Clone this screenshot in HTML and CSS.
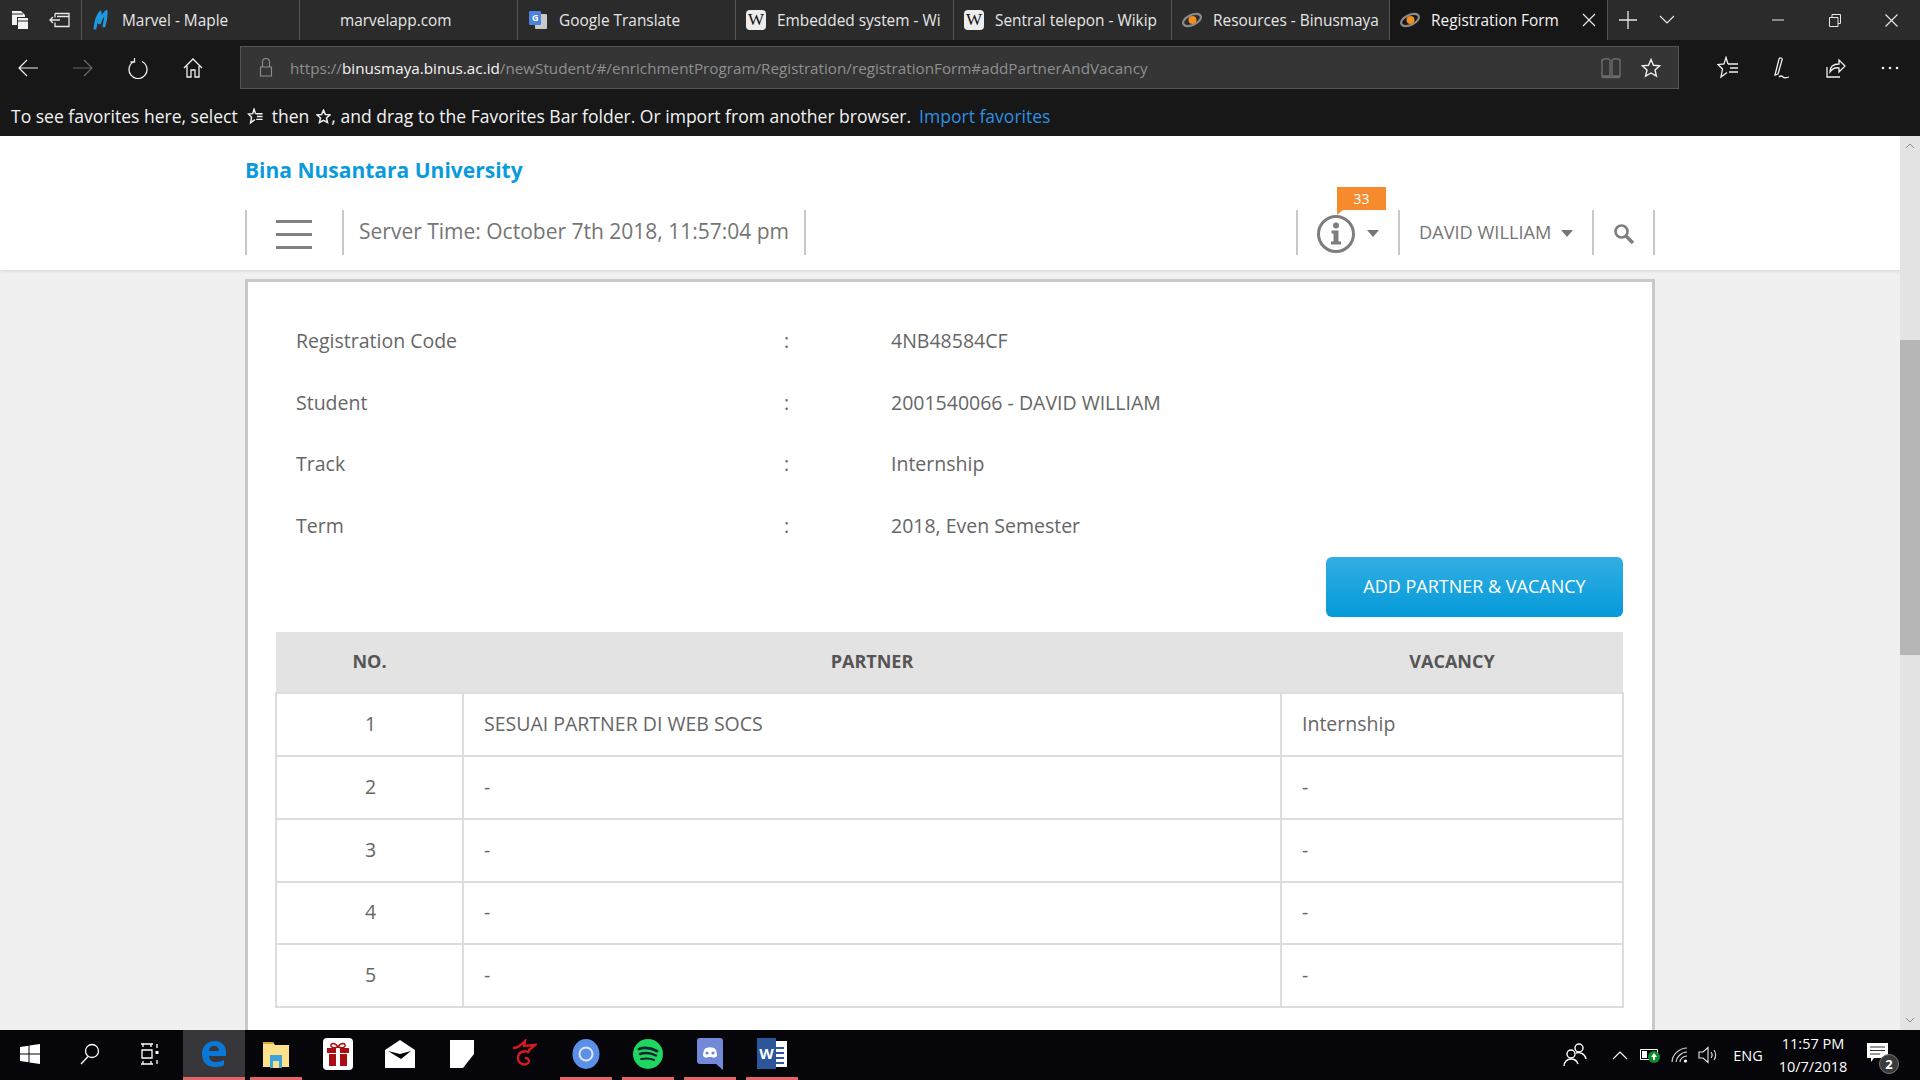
FILE: index.html
```html
<!DOCTYPE html>
<html lang="en">
<head>
<meta charset="utf-8">
<title>Registration Form</title>
<link rel="stylesheet" href="styles.css">
</head>
<body>
<div class="tabbar">
  <div class="tb-tool"><svg width="20" height="22" viewBox="0 0 20 22"><path d="M2 2h9l4 4v2H7v8H2z" fill="#f2f2f2"/><path d="M8 9h10v11H8z" fill="#f2f2f2"/><path d="M8 12h10" stroke="#2b2b2b" stroke-width="1"/><path d="M2 5h11" stroke="#2b2b2b" stroke-width="1"/></svg></div>
  <div class="tb-tool"><svg width="22" height="18" viewBox="0 0 22 18" fill="none" stroke="#e8e8e8" stroke-width="1.3"><path d="M6 2.500h14v13H6v-4M6 6.500v-4M8 5.500h12M1 9h10M4 6 1 9l3 3"/></svg></div>
  <div class="tab first"><svg class="fav" width="16" height="20" viewBox="0 0 16 20" fill="none" stroke="#1e9be0" stroke-width="3" stroke-linecap="round"><path d="M2 18C3 11 5 5 7 3c.5 4-.5 9-1 11 2-5 4-10 7-12 .5 5-1 10-2 14"/></svg><span>Marvel - Maple</span></div>
  <div class="tab"><span class="nofav">marvelapp.com</span></div>
  <div class="tab"><svg class="fav" width="18" height="20" viewBox="0 0 18 20"><rect x="6" y="4" width="12" height="15" rx="1" fill="#c9c9c9"/><rect x="0" y="1" width="12" height="14" rx="1" fill="#4a83e0"/><text x="3" y="11" class="gt">G</text></svg><span>Google Translate</span></div>
  <div class="tab"><span class="wiki">W</span><span>Embedded system - Wi</span></div>
  <div class="tab"><span class="wiki">W</span><span>Sentral telepon - Wikip</span></div>
  <div class="tab"><svg class="fav" width="20" height="18" viewBox="0 0 20 18"><ellipse cx="10" cy="9" rx="9.500" ry="5" transform="rotate(-25 10 9)" fill="none" stroke="#8a8a8a" stroke-width="2.200"/><circle cx="10.500" cy="9" r="4" fill="#ef8f1c"/></svg><span>Resources - Binusmaya</span></div>
  <div class="tab active"><svg class="fav" width="20" height="18" viewBox="0 0 20 18"><ellipse cx="10" cy="9" rx="9.500" ry="5" transform="rotate(-25 10 9)" fill="none" stroke="#8a8a8a" stroke-width="2.200"/><circle cx="10.500" cy="9" r="4" fill="#ef8f1c"/></svg><span>Registration Form</span><svg class="tab-x" width="14" height="14" viewBox="0 0 14 14" stroke="#e8e8e8" stroke-width="1.200"><path d="M1 1l12 12M13 1 1 13"/></svg></div>
  <div class="newtab"><svg width="18" height="18" viewBox="0 0 18 18" stroke="#e8e8e8" stroke-width="1.300"><path d="M9 0v18M0 9h18"/></svg></div>
  <div class="newtab"><svg width="16" height="10" viewBox="0 0 16 10" fill="none" stroke="#e8e8e8" stroke-width="1.200"><path d="M1 1l7 7 7-7"/></svg></div>
  <div class="winctl">
    <div class="winbtn"><svg width="12" height="2" viewBox="0 0 12 2"><path d="M0 1h12" stroke="#e8e8e8"/></svg></div>
    <div class="winbtn"><svg width="12" height="13" viewBox="0 0 12 13" fill="none" stroke="#e8e8e8"><path d="M.5 3.500h8.500v9H.5zM3 3.500V.5h8.500v9H9"/></svg></div>
    <div class="winbtn"><svg width="13" height="13" viewBox="0 0 13 13" stroke="#e8e8e8" stroke-width="1.100"><path d="M.5.5l12 12M12.500.5l-12 12"/></svg></div>
  </div>
</div>

<div class="toolbar">
  <div class="nav-btn"><svg width="20" height="18" viewBox="0 0 20 18" fill="none" stroke="#f0f0f0" stroke-width="1.200"><path d="M20 9H1M9 1 1 9l8 8"/></svg></div>
  <div class="nav-btn"><svg width="20" height="18" viewBox="0 0 20 18" fill="none" stroke="#666" stroke-width="1.200"><path d="M0 9h19M11 1l8 8-8 8"/></svg></div>
  <div class="nav-btn"><svg width="20" height="22" viewBox="0 0 20 22" fill="none" stroke="#f0f0f0" stroke-width="1.300"><path d="M6 4.500a9 9 0 1 0 8 0M6.500 1v4h-4"/></svg></div>
  <div class="nav-btn"><svg width="20" height="20" viewBox="0 0 20 20" fill="none" stroke="#f0f0f0" stroke-width="1.300"><path d="M1 10 10 1l9 9M4 8v11h4v-7h4v7h4V8"/></svg></div>
  <div class="address">
    <svg class="lock" width="14" height="19" viewBox="0 0 14 19" fill="none" stroke="#8f8f8f" stroke-width="1.100"><path d="M1.500 9h11v9h-11zM3.500 9V4a3.500 3.500 0 0 1 7 0v5"/></svg>
    <div class="url">https://<b>binusmaya.binus.ac.id</b>/newStudent/#/enrichmentProgram/Registration/registrationForm#addPartnerAndVacancy</div>
    <svg class="book" width="20" height="22" viewBox="0 0 20 22" fill="none" stroke="#6a6a6a" stroke-width="1.500"><path d="M1 3c3-1.500 6-1.500 8 0v16H1zM19 3c-3-1.500-6-1.500-8 0v16h8zM1 20.500h18"/></svg>
    <svg class="star" width="20" height="20" viewBox="0 0 20 20" fill="none" stroke="#f0f0f0" stroke-width="1.400"><path d="M10 1.500l2.500 5.800 6.200.5-4.700 4.100 1.400 6.100L10 15l-5.400 3 1.400-6.100L1.300 7.800l6.200-.5z"/></svg>
  </div>
  <div class="tool-row">
    <div class="act"><svg width="22" height="24" viewBox="0 0 22 24" fill="none" stroke="#f0f0f0" stroke-width="1.300"><path d="M11 8 9 1.500 7 8l-6 .5 4.500 4.500L4 21l6-4.500M11 8h10M13 12h8M12 16h9"/></svg></div>
    <div class="act"><svg width="20" height="24" viewBox="0 0 20 24" fill="none" stroke="#f0f0f0" stroke-width="1.300"><path d="M3 19 7 3c1-2 4-1 3 1L6 18zM7 21c2-2 3-1 4 0s3 1 6 0"/></svg></div>
    <div class="act"><svg width="20" height="22" viewBox="0 0 20 22" fill="none" stroke="#f0f0f0" stroke-width="1.300"><path d="M1 10v10h13M4 15c0-6 4-8 9-8V3l6 6-6 6v-4c-4-1-7 1-9 4z"/></svg></div>
    <div class="act"><svg width="18" height="4" viewBox="0 0 18 4" fill="#f0f0f0"><circle cx="2" cy="2" r="1.300"/><circle cx="9" cy="2" r="1.300"/><circle cx="16" cy="2" r="1.300"/></svg></div>
  </div>
</div>

<div class="favbar">
  <span>To see favorites here, select</span>
  <svg class="fav-hub" width="17" height="17" viewBox="0 0 22 24" fill="none" stroke="#f0f0f0" stroke-width="2"><path d="M11 8 9 1.500 7 8l-6 .5 4.500 4.500L4 21l6-4.500M11 8h10M13 12h8M12 16h9"/></svg>
  <span>then</span>
  <svg class="fav-star" width="15" height="15" viewBox="0 0 20 20" fill="none" stroke="#f0f0f0" stroke-width="2"><path d="M10 1.500l2.500 5.800 6.200.5-4.700 4.100 1.400 6.100L10 15l-5.400 3 1.400-6.100L1.300 7.800l6.200-.5z"/></svg><span>, and drag to the Favorites Bar folder. Or import from another browser.</span>
  <a class="import">Import favorites</a>
</div>

<div class="viewport">
  <div class="page">
    <header class="head">
      <div class="brand">Bina Nusantara University</div>
      <div class="topnav">
        <div class="burger"><i></i><i></i><i></i></div>
        <div class="server">Server Time: October 7th 2018, 11:57:04 pm</div>
        <div class="notif">
          <span class="badge">33</span>
          <svg width="40" height="40" viewBox="0 0 40 40"><circle cx="20" cy="20" r="17.500" fill="none" stroke="#7d7d7d" stroke-width="3"/><circle cx="20" cy="11.500" r="3" fill="#7d7d7d"/><path d="M15.500 16.500h7v11h2.500v3H15v-3h2.500v-8h-2z" fill="#7d7d7d"/></svg>
          <i class="caret"></i>
        </div>
        <div class="user">DAVID WILLIAM<i class="caret"></i></div>
        <div class="search"><svg width="22" height="22" viewBox="0 0 22 22" fill="none" stroke="#7d7d7d"><circle cx="8.500" cy="8.500" r="6" stroke-width="2.600"/><path d="M13 13l7 7" stroke-width="3.400"/></svg></div>
      </div>
    </header>
    <main class="card">
      <dl class="info">
        <dt>Registration Code</dt><dd class="colon">:</dd><dd>4NB48584CF</dd>
        <dt>Student</dt><dd class="colon">:</dd><dd>2001540066 - DAVID WILLIAM</dd>
        <dt>Track</dt><dd class="colon">:</dd><dd>Internship</dd>
        <dt>Term</dt><dd class="colon">:</dd><dd>2018, Even Semester</dd>
      </dl>
      <div class="actions"><button class="add">ADD PARTNER &amp; VACANCY</button></div>
      <table class="grid">
        <colgroup><col class="c1"><col class="c2"><col class="c3"></colgroup>
        <thead><tr><th>NO.</th><th>PARTNER</th><th>VACANCY</th></tr></thead>
        <tbody>
          <tr><td class="no">1</td><td>SESUAI PARTNER DI WEB SOCS</td><td>Internship</td></tr>
          <tr><td class="no">2</td><td>-</td><td>-</td></tr>
          <tr><td class="no">3</td><td>-</td><td>-</td></tr>
          <tr><td class="no">4</td><td>-</td><td>-</td></tr>
          <tr><td class="no">5</td><td>-</td><td>-</td></tr>
        </tbody>
      </table>
    </main>
  </div>
  <div class="scroll">
    <div class="sc-arrow"><svg width="10" height="6" viewBox="0 0 10 6" fill="none" stroke="#8a8a8a"><path d="M1 5l4-4 4 4"/></svg></div>
    <div class="sc-track"><div class="sc-thumb"></div></div>
    <div class="sc-arrow"><svg width="10" height="6" viewBox="0 0 10 6" fill="none" stroke="#8a8a8a"><path d="M1 1l4 4 4-4"/></svg></div>
  </div>
</div>

<footer class="taskbar">
  <div class="tool"><svg width="20" height="20" viewBox="0 0 20 20" fill="#fff"><path d="M0 3l8.500-1.200v7.700H0zM9.500 1.600 20 0v9.500H9.500zM0 10.500h8.500v7.700L0 17zM9.500 10.500H20V20L9.500 18.400z"/></svg></div>
  <div class="tool"><svg width="20" height="22" viewBox="0 0 20 22" fill="none" stroke="#fff" stroke-width="1.300"><circle cx="12" cy="8" r="6.500"/><path d="M8 13.500 1 21"/></svg></div>
  <div class="tool tool-last"><svg width="20" height="22" viewBox="0 0 20 22" fill="none" stroke="#fff" stroke-width="1.300"><path d="M1 1h12M3 1v3M11 1v3M2 7h10v8H2zM1 21h12M3 18v3M11 18v3M17 1v4M17 17v4"/><rect x="15.500" y="8" width="3" height="3" fill="#fff" stroke="none"/></svg></div>
  <div class="app active run"><svg width="26" height="28" viewBox="0 0 26 28"><path d="M1 14C1 6 7 1 14 1c6 0 11 4 11 11v4H8c0 4 3 6 7 6 3 0 6-1 8-2v5c-3 2-6 2-9 2C6 27 1 22 1 14zm7-3h10c0-3-2-5-5-5s-5 2-5 5z" fill="#0a78d7"/></svg></div>
  <div class="app run"><svg width="28" height="28" viewBox="0 0 28 28"><path d="M1 2h10l2 3h14v22H1z" fill="#ffe08a"/><path d="M1 2h10l1 2H1z" fill="#d9a72c"/><rect x="8" y="15" width="12" height="13" fill="#3aa4dc"/><rect x="11" y="21" width="6" height="7" fill="#ffe08a"/></svg></div>
  <div class="app"><svg width="30" height="32" viewBox="0 0 30 32"><rect width="30" height="32" rx="4" fill="#fff"/><path d="M4 10h22v5H4zM6 16h18v12H6z" fill="#a80e14"/><path d="M13 10h4v18h-4z" fill="#fff"/><path d="M15 9c-3-5-8-4-7-1 1 2 4 2 7 1zm0 0c3-5 8-4 7-1-1 2-4 2-7 1z" fill="none" stroke="#a80e14" stroke-width="1.600"/></svg></div>
  <div class="app"><svg width="30" height="28" viewBox="0 0 30 28"><path d="M0 10 15 0l15 10v18H0z" fill="#fff"/><path d="M3 11l12 3 11-3-10 8z" fill="#000"/></svg></div>
  <div class="app"><svg width="24" height="28" viewBox="0 0 24 28"><rect width="24" height="28" fill="#fff"/><path d="M24 14 13 28h11z" fill="#05050a"/></svg></div>
  <div class="app"><svg width="26" height="30" viewBox="0 0 26 30" fill="none" stroke="#d51a20" stroke-width="2.400"><path d="M2 9c5 0 8-3 12-7l-1 5 11-1-6 5 0 2"/><path d="M18 14c-3-3-11-2-11 5 0 6 7 8 10 5 2-2 1-5-3-5"/></svg></div>
  <div class="app run"><svg width="28" height="30" viewBox="0 0 28 30"><ellipse cx="14" cy="15" rx="13.500" ry="15" fill="#5b8fe8"/><circle cx="14" cy="15" r="6.500" fill="none" stroke="#dbe7fb" stroke-width="2"/></svg></div>
  <div class="app run"><svg width="30" height="30" viewBox="0 0 30 30"><circle cx="15" cy="15" r="15" fill="#1ed760"/><g fill="none" stroke="#123" stroke-linecap="round"><path d="M6 10c6-2 12-1 18 2" stroke-width="2.800"/><path d="M7 15c5-1.500 11-1 16 1.500" stroke-width="2.400"/><path d="M8 20c5-1 9-1 13 1" stroke-width="2"/></g></svg></div>
  <div class="app run"><svg width="26" height="32" viewBox="0 0 26 32"><path d="M3 0h20a3 3 0 0 1 3 3v29l-7-6H3a3 3 0 0 1-3-3V3a3 3 0 0 1 3-3z" fill="#7289da"/><path d="M6 18c0-4 1-7 3-8 3-1 5-1 8 0 2 1 3 4 3 8-2 2-4 2-5 1H11c-1 1-3 1-5-1z" fill="#fff"/><circle cx="10" cy="15" r="1.600" fill="#7289da"/><circle cx="16" cy="15" r="1.600" fill="#7289da"/></svg></div>
  <div class="app run word"><span class="word-page"><i></i><i></i><i></i><i></i></span><span class="word-w">W</span></div>
  <div class="tray">
    <div class="ti w-people"><svg width="26" height="24" viewBox="0 0 26 24" fill="none" stroke="#fff" stroke-width="1.400"><circle cx="9" cy="11" r="4"/><path d="M2 23c0-4 3-7 7-7s6 2 7 5"/><circle cx="17" cy="5" r="4"/><path d="M14 10c3-1 9 0 10 6"/></svg></div>
    <div class="ti w-30"><svg width="16" height="9" viewBox="0 0 16 9" fill="none" stroke="#fff" stroke-width="1.200"><path d="M1 8l7-7 7 7"/></svg></div>
    <div class="ti w-30"><svg width="20" height="16" viewBox="0 0 20 16"><path d="M.5 2.500h17v10H.5z" fill="none" stroke="#fff"/><rect x="2" y="4" width="5" height="7" fill="#fff"/><circle cx="14" cy="10" r="6" fill="#0c8a2c"/><path d="M14 6l3 4h-2v3h-2v-3h-2z" fill="#fff"/></svg></div>
    <div class="ti w-30"><svg width="18" height="16" viewBox="0 0 18 16" fill="none" stroke="#d8d8d8" stroke-width="1.100"><path d="M1 15C1 8 8 1 16 1M5 15c0-4 5-10 11-10M9 15c0-3 3-6 7-6"/><circle cx="14.500" cy="14" r="1.600" fill="#fff" stroke="none"/></svg></div>
    <div class="ti w-26"><svg width="21" height="18" viewBox="0 0 21 18" fill="none" stroke="#e8e8e8" stroke-width="1.100"><path d="M1 6h4l5-4.500v15L5 12H1zM13 6c1.500 2 1.500 4 0 6M16 4c2 3 2 7 0 10"/></svg></div>
    <div class="ti w-eng">ENG</div>
    <div class="ti w-clock"><span>11:57 PM</span><span>10/7/2018</span></div>
    <div class="ti w-note"><svg width="21" height="19" viewBox="0 0 21 19"><path d="M0 0h21v15H7l-3 4v-4H0z" fill="#fff"/><path d="M3 4h15M3 7.500h15M3 11h10" stroke="#333"/></svg><span class="note-count">2</span></div>
  </div>
</footer>
</body>
</html>
```
FILE: styles.css
```css
* { box-sizing: border-box; }
html, body { margin: 0; padding: 0; }
body {
  width: 1920px; height: 1080px; overflow: hidden;
  display: flex; flex-direction: column;
  font-family: "Open Sans", "Noto Sans", sans-serif;
  background: #171717;
}

/* tab strip */
.tabbar { height: 40px; flex: none; display: flex; background: #2b2b2b; color: #e6e6e6; font-size: 15.400px; }
.tb-tool { width: 40px; display: flex; align-items: center; justify-content: center; }
.tab { width: 218px; height: 40px; flex: none; display: flex; align-items: center; position: relative; padding-left: 10px; border-right: 1px solid #555; white-space: nowrap; overflow: hidden; }
.tab.first { margin-left: 1px; border-left: 1px solid #555; width: 219px; padding-left: 9px; }
.tab .fav { width: 20px; margin-right: 11px; flex: none; }
.tab .nofav { margin-left: 30px; }
.gt { font: bold 9px "Open Sans", sans-serif; fill: #fff; }
.wiki { width: 20px; height: 20px; margin-right: 11px; flex: none; background: #ededed; border-radius: 4px; color: #111; font: 17px/20px "Liberation Serif", serif; text-align: center; }
.tab.active { background: #171717; color: #f2f2f2; }
.tab-x { position: absolute; right: 11px; top: 13px; }
.newtab { width: 39px; flex: none; display: flex; align-items: center; justify-content: center; }
.winctl { margin-left: auto; display: flex; }
.winbtn { width: 57px; display: flex; align-items: center; justify-content: center; }

/* address toolbar */
.toolbar { height: 52px; flex: none; display: flex; align-items: flex-start; padding-top: 6px; background: #171717; }
.nav-btn { width: 55px; height: 43px; flex: none; display: flex; align-items: center; justify-content: center; }
.address { margin-left: 20px; width: 1439px; height: 43px; flex: none; display: flex; align-items: center; background: #353535; border: 1px solid #555; }
.lock { margin-left: 18px; flex: none; }
.url { margin-left: 17px; color: #8f8f8f; font-size: 15.240px; white-space: nowrap; }
.url b { font-weight: 400; color: #f4f4f4; }
.book { margin-left: auto; flex: none; }
.star { margin: 0 17px 0 20px; flex: none; }
.tool-row { margin-left: 22px; display: flex; }
.act { width: 54px; height: 43px; display: flex; align-items: center; justify-content: center; }

/* favourites bar */
.favbar { height: 44px; flex: none; display: flex; align-items: center; padding: 4px 0 0 11px; color: #f2f2f2; font-size: 17.550px; background: #171717; white-space: pre; }
.fav-hub { margin: 0 8px 0 9px; }
.fav-star { margin-left: 7px; }
.import { margin-left: 8px; color: #2f8fe0; }

/* page */
.viewport { flex: 1; min-height: 0; display: flex; background: #f0f0f0; }
.page { flex: 1; min-width: 0; overflow: hidden; color: #666; }
.head { background: #fff; height: 134px; padding: 20px 0 0 245px; box-shadow: 0 1px 3px rgba(0,0,0,.12); position: relative; }
.brand { font-size: 21px; line-height: 28px; font-weight: 700; color: #0a9bdc; }
.topnav { margin-top: 26px; width: 1410px; height: 45px; display: flex; align-items: center; color: #757575; }
.burger { width: 99px; height: 45px; padding: 10px 0 0 29px; border-left: 2px solid #c8c8c8; border-right: 2px solid #c8c8c8; display: flex; flex-direction: column; gap: 10px; }
.burger i { display: block; width: 36px; height: 3px; background: #808080; }
.server { height: 45px; padding: 0 15px; line-height: 43px; font-size: 21px; border-right: 2px solid #c8c8c8; white-space: nowrap; }
.notif { margin-left: auto; width: 104px; height: 45px; padding-left: 18px; border-left: 2px solid #c8c8c8; border-right: 2px solid #c8c8c8; display: flex; align-items: center; position: relative; }
.notif svg { flex: none; margin-top: 2px; }
.notif .caret { margin-left: 11px; margin-top: 2px; }
.badge { position: absolute; left: 39px; top: -23px; width: 49px; height: 23px; background: #f68b2e; color: #fff; font-size: 14px; line-height: 23px; text-align: center; }
.badge::after { content: ""; position: absolute; left: 0; top: 23px; border-top: 5px solid #f68b2e; border-right: 6px solid transparent; }
.caret { display: inline-block; width: 0; height: 0; border-left: 6px solid transparent; border-right: 6px solid transparent; border-top: 7px solid #757575; }
.user { width: 194px; height: 45px; padding: 0 0 2px 19px; border-right: 2px solid #c8c8c8; display: flex; align-items: center; font-size: 18.200px; white-space: nowrap; }
.user .caret { margin-left: 10px; margin-top: 4px; }
.search { width: 61px; height: 45px; border-right: 2px solid #c8c8c8; display: flex; align-items: center; justify-content: center; padding: 2px 0 0 1px; }

.card { margin: 9px 0 0 245px; width: 1410px; min-height: 760px; padding: 28px 29px 0 27px; background: #fff; border: 3px solid #c9c9c9; }
.info { margin: 0; padding-left: 21px; display: grid; grid-template-columns: 488px 107px 1fr; grid-auto-rows: 61.500px; align-items: center; font-size: 19.500px; }
.info dt, .info dd { margin: 0; }
.actions { margin-top: 1px; display: flex; justify-content: flex-end; }
.add { width: 297px; height: 60px; padding: 0 0 2px; border: 0; border-radius: 6px; background: linear-gradient(#33aee3, #049ad9); color: #fff; font: 18px "Open Sans", sans-serif; }
.grid { margin-top: 15px; width: 1347px; border-collapse: collapse; table-layout: fixed; font-size: 19.500px; }
.c1 { width: 187px; } .c2 { width: 818px; } .c3 { width: 342px; }
.grid th { height: 61px; padding: 0 0 2px; background: #e3e3e3; color: #555; font-size: 18px; font-weight: 700; text-align: center; }
.grid td { height: 62.850px; padding: 0 0 2px 20px; border: 2px solid #ddd; }
.grid td.no { padding: 0 0 2px 2px; text-align: center; }

/* scrollbar */
.scroll { width: 20px; flex: none; display: flex; flex-direction: column; background: #e3e3e3; }
.sc-arrow { height: 20px; display: flex; align-items: center; justify-content: center; }
.sc-track { flex: 1; padding-top: 184px; }
.sc-thumb { height: 315px; background: #b6b6b6; }

/* taskbar */
.taskbar { height: 50px; flex: none; display: flex; background: #05050a; color: #fff; }
.tool { width: 60px; display: flex; align-items: center; justify-content: center; padding-bottom: 3px; }
.tool-last { margin-right: 3px; }
.app { width: 52px; margin: 0 5px; flex: none; display: flex; align-items: center; justify-content: center; border-bottom: 3px solid transparent; }
.app.active { width: 62px; margin: 0; background: #37373b; }
.run { border-bottom-color: #e06666; }
.word { position: relative; }
.word-page { width: 23px; height: 26px; margin-left: 6px; padding: 6px 3px 0 11px; background: #fff; display: flex; flex-direction: column; gap: 3px; }
.word-page i { display: block; height: 2px; background: #2b579a; }
.word-w { position: absolute; left: 11px; top: 8px; width: 19px; height: 31px; background: #2b579a; color: #fff; font-size: 15px; font-weight: 700; line-height: 30px; text-align: center; }
.tray { margin-left: auto; padding-right: 13px; display: flex; }
.ti { display: flex; align-items: center; justify-content: center; }
.w-people { width: 60px; }
.w-30 { width: 30px; }
.w-26 { width: 26px; }
.w-eng { width: 54px; font-size: 14.500px; }
.w-clock { width: 76px; flex-direction: column; font-size: 14.500px; line-height: 23px; white-space: nowrap; }
.w-note { width: 56px; position: relative; padding-right: 4px; padding-bottom: 6px; }
.note-count { position: absolute; left: 28px; top: 24px; width: 20px; height: 20px; border-radius: 50%; background: #3a3a3a; border: 1px solid #777; color: #fff; font-size: 13px; font-weight: 700; line-height: 18px; text-align: center; }
```
